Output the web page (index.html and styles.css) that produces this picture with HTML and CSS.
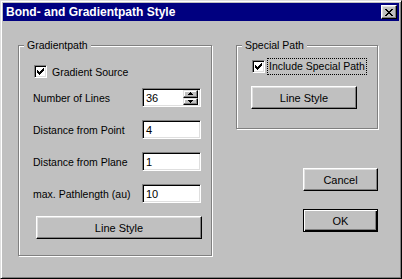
FILE: index.html
```html
<!DOCTYPE html>
<html lang="en">
<head>
    <meta charset="UTF-8">
    <title>Bond- and Gradientpath Style</title>
    <link rel="stylesheet" href="styles.css">
</head>
<body>
<div class="window">
    <div class="titlebar">
        <span class="title">Bond- and Gradientpath Style</span>
        <button class="close">
            <svg width="8" height="7" viewBox="0 0 8 7" shape-rendering="crispEdges">
                <path d="M0 0h2v1h-2z M6 0h2v1h-2z M1 1h2v1h-2z M5 1h2v1h-2z M2 2h4v1h-4z M3 3h2v1h-2z M2 4h4v1h-4z M1 5h2v1h-2z M5 5h2v1h-2z M0 6h2v1h-2z M6 6h2v1h-2z" fill="#000"/>
            </svg>
        </button>
    </div>

    <div class="content">
        <div class="group group-gradient">
            <span class="legend">Gradientpath</span>

            <label class="check-row">
                <span class="checkbox">
                    <svg width="9" height="9" viewBox="0 0 9 9" shape-rendering="crispEdges">
                        <path d="M1 3h1v3h-1z M2 4h1v3h-1z M3 5h1v3h-1z M4 4h1v3h-1z M5 3h1v3h-1z M6 2h1v3h-1z M7 1h1v3h-1z" fill="#000"/>
                    </svg>
                </span>
                <span>Gradient Source</span>
            </label>

            <div class="row row-first">
                <span class="row-label">Number of Lines</span>
                <div class="field spin">
                    <span class="field-text">36</span>
                    <div class="spin-buttons">
                        <span class="spin-btn">
                            <svg width="5" height="3" viewBox="0 0 5 3" shape-rendering="crispEdges"><path d="M2 0h1v1h-1z M1 1h3v1h-3z M0 2h5v1h-5z" fill="#000"/></svg>
                        </span>
                        <span class="spin-btn">
                            <svg width="5" height="3" viewBox="0 0 5 3" shape-rendering="crispEdges"><path d="M0 0h5v1h-5z M1 1h3v1h-3z M2 2h1v1h-1z" fill="#000"/></svg>
                        </span>
                    </div>
                </div>
            </div>

            <div class="row">
                <span class="row-label">Distance from Point</span>
                <div class="field"><span class="field-text">4</span></div>
            </div>

            <div class="row">
                <span class="row-label">Distance from Plane</span>
                <div class="field"><span class="field-text">1</span></div>
            </div>

            <div class="row">
                <span class="row-label">max. Pathlength (au)</span>
                <div class="field"><span class="field-text">10</span></div>
            </div>

            <button class="btn btn-wide">Line Style</button>
        </div>

        <div class="side">
            <div class="group group-special">
                <span class="legend">Special Path</span>

                <label class="check-row">
                    <span class="checkbox">
                        <svg width="9" height="9" viewBox="0 0 9 9" shape-rendering="crispEdges">
                            <path d="M1 3h1v3h-1z M2 4h1v3h-1z M3 5h1v3h-1z M4 4h1v3h-1z M5 3h1v3h-1z M6 2h1v3h-1z M7 1h1v3h-1z" fill="#000"/>
                        </svg>
                    </span>
                    <span class="focus">Include Special Path</span>
                </label>

                <button class="btn btn-special">Line Style</button>
            </div>

            <button class="btn btn-cancel">Cancel</button>
            <button class="btn btn-ok">OK</button>
        </div>
    </div>
</div>
</body>
</html>
```

FILE: styles.css
```css
body {
    margin: 0;
    padding: 0;
    background-color: #c0c0c0;
    font-family: "Liberation Sans", Arial, sans-serif;
    font-size: 10.5px;
    color: #000;
}
.window {
    width: 402px;
    height: 279px;
    box-sizing: border-box;
    background-color: #c0c0c0;
    border: 1px solid;
    border-color: #dfdfdf #000 #000 #dfdfdf;
    box-shadow: inset 1px 1px #fff, inset -1px -1px #808080;
    padding: 2px;
}
.titlebar {
    height: 18px;
    background-color: #000080;
    display: flex;
    align-items: center;
    justify-content: space-between;
    padding: 0 2px 0 3px;
}
.title {
    color: #fff;
    font-weight: bold;
    font-size: 12px;
}
.close {
    width: 16px;
    height: 14px;
    padding: 0;
    box-sizing: border-box;
    background-color: #c0c0c0;
    border: 1px solid;
    border-color: #fff #000 #000 #fff;
    box-shadow: inset -1px -1px #808080, inset 1px 1px #dfdfdf;
    display: flex;
    align-items: center;
    justify-content: center;
}
.content {
    display: flex;
    align-items: flex-start;
    padding: 24px 0 0 15px;
}
.group {
    position: relative;
    box-sizing: border-box;
    border: 1px solid #808080;
    box-shadow: inset 1px 1px #fff, 1px 1px #fff;
    display: flex;
    flex-direction: column;
    align-items: flex-start;
}
.legend {
    position: absolute;
    top: -8px;
    left: 5px;
    padding: 0 3px;
    background-color: #c0c0c0;
    line-height: 14px;
}
.group-gradient {
    width: 194px;
    height: 211px;
    padding: 19px 10px 0 15px;
}
.side {
    margin-left: 24px;
    display: flex;
    flex-direction: column;
    align-items: flex-end;
}
.group-special {
    width: 142px;
    height: 84px;
    padding: 14px 0 0 15px;
}
.check-row {
    display: flex;
    align-items: center;
    height: 13px;
}
.checkbox {
    width: 13px;
    height: 13px;
    box-sizing: border-box;
    background-color: #fff;
    border: 1px solid;
    border-color: #808080 #fff #fff #808080;
    box-shadow: inset 1px 1px #000, inset -1px -1px #dfdfdf;
    display: flex;
    align-items: center;
    justify-content: center;
    margin-right: 5px;
}
.focus {
    outline: 1px dotted #000;
    padding: 1px 1px 2px 1px;
    margin-left: -2px;
}
.row {
    display: flex;
    align-items: center;
    width: 100%;
    margin-top: 13px;
}
.row-first {
    margin-top: 10px;
}
.row-label {
    flex: 1;
    margin-left: -1px;
}
.field {
    width: 59px;
    height: 19px;
    box-sizing: border-box;
    background-color: #fff;
    border: 1px solid;
    border-color: #808080 #fff #fff #808080;
    box-shadow: inset 1px 1px #000, inset -1px -1px #dfdfdf;
    display: flex;
    align-items: center;
    padding: 2px 2px 2px 3px;
}
.field-text {
    flex: 1;
    font-size: 11px;
}
.spin-buttons {
    display: flex;
    flex-direction: column;
    height: 15px;
    width: 15px;
}
.spin-btn {
    flex: 1;
    box-sizing: border-box;
    background-color: #c0c0c0;
    border: 1px solid;
    border-color: #dfdfdf #000 #000 #dfdfdf;
    box-shadow: inset -1px -1px #808080, inset 1px 1px #fff;
    display: flex;
    align-items: center;
    justify-content: center;
}
.btn {
    font-family: inherit;
    font-size: 11px;
    color: #000;
    height: 23px;
    padding: 0;
    box-sizing: border-box;
    background-color: #c0c0c0;
    border: 1px solid;
    border-color: #fff #000 #000 #fff;
    box-shadow: inset -1px -1px #808080, inset 1px 1px #dfdfdf;
}
.btn-wide {
    width: 166px;
    margin: 13px 0 0 2px;
}
.btn-special {
    width: 106px;
    margin: 13px 0 0 -1px;
}
.btn-cancel {
    width: 75px;
    margin-top: 39px;
}
.btn-ok {
    width: 75px;
    margin-top: 18px;
    border: 1px solid #000;
    box-shadow: inset 1px 1px #fff, inset -1px -1px #000, inset -2px -2px #808080;
}
```
